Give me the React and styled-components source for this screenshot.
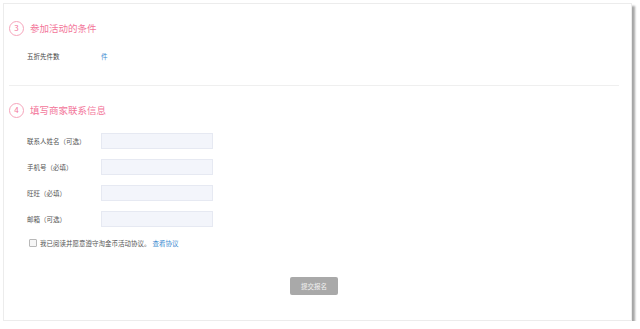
import styled, { createGlobalStyle } from "styled-components";

const fields = [
  { label: "联系人姓名（可选）" },
  { label: "手机号（必填）" },
  { label: "旺旺（必填）" },
  { label: "邮箱（可选）" },
];

export default function App() {
  return (
    <>
      <GlobalStyle />
      <Card>
        <Section>
          <SectionTitle>
            <StepNo>3</StepNo>
            参加活动的条件
          </SectionTitle>
          <CondRow>
            <CondLabel>五折先件数</CondLabel>
            <CondValue>件</CondValue>
          </CondRow>
        </Section>

        <Section last>
          <SectionTitle>
            <StepNo>4</StepNo>
            填写商家联系信息
          </SectionTitle>
          <Form>
            {fields.map((f) => (
              <FieldRow key={f.label}>
                <FieldLabel>{f.label}</FieldLabel>
                <Input />
              </FieldRow>
            ))}
          </Form>
          <Agree>
            <Check />
            我已阅读并愿意遵守淘金币活动协议。
            <AgreeLink>查看协议</AgreeLink>
          </Agree>
          <Actions>
            <Submit>提交报名</Submit>
          </Actions>
        </Section>
      </Card>
    </>
  );
}

// ----------------------- Styled Components -----------------------
const GlobalStyle = createGlobalStyle`
  body {
    margin: 0;
    background: #ffffff;
    font-family: "Noto Sans CJK SC", "Liberation Sans", sans-serif;
  }
`;

const Card = styled.div`
  margin: 3px 0 0 3px;
  width: 629px;
  height: 318px;
  box-sizing: border-box;
  background: #fff;
  border: 1px solid #ececec;
  box-shadow: 3px 3px 2px rgba(0, 0, 0, 0.35);
  padding: 0 12px 0 5px;
`;

const Section = styled.div`
  border-bottom: ${(p) => (p.last ? "none" : "1px solid #efefef")};
  padding-top: 16px;
  height: ${(p) => (p.last ? "auto" : "65px")};
`;

const SectionTitle = styled.div`
  display: flex;
  align-items: center;
  gap: 6px;
  color: #f3769a;
  font-size: 9.5px;
  line-height: 16px;
`;

const StepNo = styled.span`
  width: 13px;
  height: 13px;
  border: 1px solid #f6a5bb;
  border-radius: 50%;
  display: flex;
  align-items: center;
  justify-content: center;
  font-size: 8px;
  color: #f3769a;
  line-height: 1;
`;

const CondRow = styled.div`
  display: flex;
  margin: 14px 0 0 18px;
  font-size: 6.5px;
  line-height: 12px;
`;

const CondLabel = styled.span`
  width: 74px;
  color: #444;
`;

const CondValue = styled.span`
  color: #3a8ad0;
`;

const Form = styled.div`
  display: flex;
  flex-direction: column;
  gap: 10px;
  margin: 15px 0 0 18px;
`;

const FieldRow = styled.div`
  display: flex;
  align-items: center;
`;

const FieldLabel = styled.span`
  width: 74px;
  font-size: 6.5px;
  color: #555;
`;

const Input = styled.div`
  width: 112px;
  height: 16px;
  box-sizing: border-box;
  background: #f3f5fb;
  border: 1px solid #e6e9f2;
`;

const Agree = styled.div`
  display: flex;
  align-items: center;
  margin: 11px 0 0 20px;
  font-size: 6.5px;
  color: #555;
`;

const Check = styled.span`
  width: 6px;
  height: 6px;
  border: 1px solid #b8b8b8;
  border-radius: 1px;
  background: #f6f6f6;
  margin-right: 3px;
`;

const AgreeLink = styled.span`
  color: #3a8ad0;
  margin-left: 2px;
`;

const Actions = styled.div`
  display: flex;
  justify-content: center;
  margin-top: 29px;
`;

const Submit = styled.button`
  width: 48px;
  height: 18px;
  border: none;
  border-radius: 2px;
  background: #a9a9a9;
  color: #f2f2f2;
  font-family: inherit;
  font-size: 6.5px;
  padding: 0;
`;
